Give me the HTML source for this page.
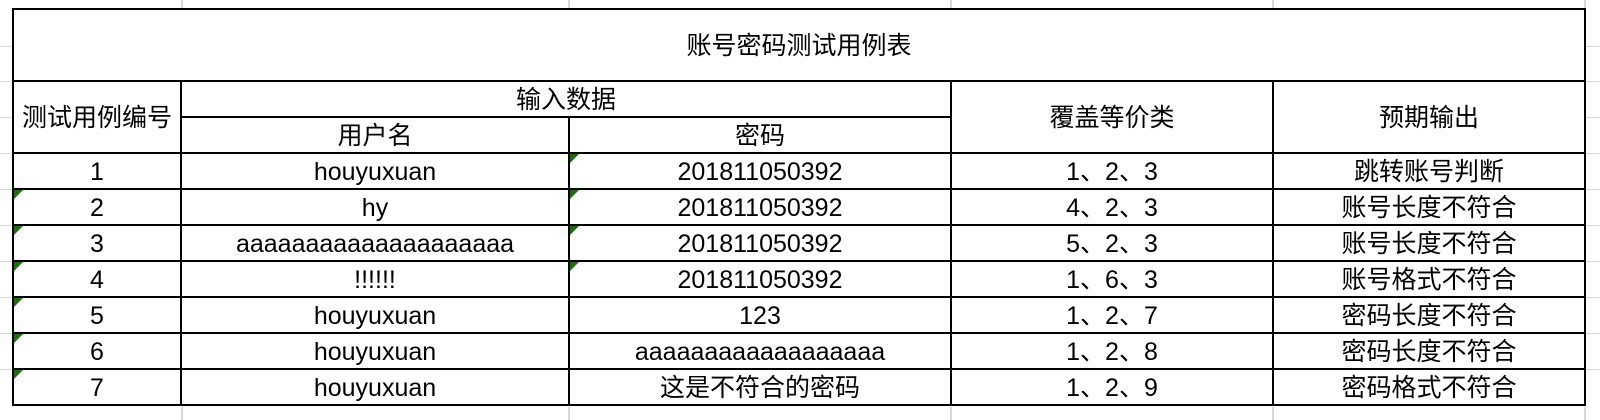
<!DOCTYPE html>
<html><head><meta charset="utf-8"><style>
body{margin:0;width:1600px;height:420px;background:#fff;position:relative;overflow:hidden;font-family:"Liberation Sans","Noto Sans CJK SC",sans-serif;font-size:25px;color:#000}
.g{position:absolute;background:#d6d6d6}
.l{position:absolute;background:#000}
.t{position:absolute;display:flex;align-items:center;justify-content:center;white-space:nowrap;line-height:1;padding-top:2px;box-sizing:border-box}
.tri{position:absolute;width:0;height:0;border-top:9px solid #1f6b12;border-right:9px solid transparent}
</style></head><body>
<div class="g" style="left:181px;top:0;width:2px;height:420px"></div>
<div class="g" style="left:568px;top:0;width:2px;height:420px"></div>
<div class="g" style="left:950px;top:0;width:2px;height:420px"></div>
<div class="g" style="left:1272px;top:0;width:2px;height:420px"></div>
<div class="g" style="left:1584px;top:0;width:2px;height:420px"></div>
<div class="g" style="left:0;top:46px;width:1600px;height:1px"></div>
<div class="g" style="left:0;top:81px;width:1600px;height:1px"></div>
<div class="g" style="left:0;top:117px;width:1600px;height:1px"></div>
<div class="g" style="left:0;top:153px;width:1600px;height:1px"></div>
<div class="g" style="left:0;top:189px;width:1600px;height:1px"></div>
<div class="g" style="left:0;top:225px;width:1600px;height:1px"></div>
<div class="g" style="left:0;top:261px;width:1600px;height:1px"></div>
<div class="g" style="left:0;top:297px;width:1600px;height:1px"></div>
<div class="g" style="left:0;top:333px;width:1600px;height:1px"></div>
<div class="g" style="left:0;top:369px;width:1600px;height:1px"></div>
<div style="position:absolute;left:13px;top:9px;width:1573px;height:398px;background:#fff"></div>
<div class="l" style="left:12px;top:8px;width:1574px;height:2px"></div>
<div class="l" style="left:12px;top:80px;width:1574px;height:2px"></div>
<div class="l" style="left:181px;top:116px;width:770px;height:2px"></div>
<div class="l" style="left:12px;top:152px;width:1574px;height:2px"></div>
<div class="l" style="left:12px;top:188px;width:1574px;height:2px"></div>
<div class="l" style="left:12px;top:224px;width:1574px;height:2px"></div>
<div class="l" style="left:12px;top:260px;width:1574px;height:2px"></div>
<div class="l" style="left:12px;top:296px;width:1574px;height:2px"></div>
<div class="l" style="left:12px;top:332px;width:1574px;height:2px"></div>
<div class="l" style="left:12px;top:368px;width:1574px;height:2px"></div>
<div class="l" style="left:12px;top:404px;width:1574px;height:2px"></div>
<div class="l" style="left:12px;top:8px;width:2px;height:398px"></div>
<div class="l" style="left:1584px;top:8px;width:2px;height:398px"></div>
<div class="l" style="left:180px;top:80px;width:2px;height:326px"></div>
<div class="l" style="left:568px;top:116px;width:2px;height:290px"></div>
<div class="l" style="left:950px;top:80px;width:2px;height:326px"></div>
<div class="l" style="left:1272px;top:80px;width:2px;height:326px"></div>
<div class="t" style="left:13px;top:10px;width:1572px;height:71px">账号密码测试用例表</div>
<div class="t" style="left:13px;top:82px;width:168px;height:71px">测试用例编号</div>
<div class="t" style="left:182px;top:81px;width:768px;height:36px">输入数据</div>
<div class="t" style="left:182px;top:118px;width:386px;height:35px">用户名</div>
<div class="t" style="left:570px;top:118px;width:380px;height:35px">密码</div>
<div class="t" style="left:952px;top:82px;width:320px;height:71px">覆盖等价类</div>
<div class="t" style="left:1274px;top:82px;width:310px;height:71px">预期输出</div>

<div class="t" style="left:13px;top:154px;width:168px;height:35px">1</div>
<div class="t" style="left:182px;top:154px;width:386px;height:35px">houyuxuan</div>
<div class="t" style="left:570px;top:154px;width:380px;height:35px">201811050392</div>
<div class="t" style="left:952px;top:154px;width:320px;height:35px">1、2、3</div>
<div class="t" style="left:1274px;top:154px;width:310px;height:35px">跳转账号判断</div>

<div class="t" style="left:13px;top:190px;width:168px;height:35px">2</div>
<div class="t" style="left:182px;top:190px;width:386px;height:35px">hy</div>
<div class="t" style="left:570px;top:190px;width:380px;height:35px">201811050392</div>
<div class="t" style="left:952px;top:190px;width:320px;height:35px">4、2、3</div>
<div class="t" style="left:1274px;top:190px;width:310px;height:35px">账号长度不符合</div>

<div class="t" style="left:13px;top:226px;width:168px;height:35px">3</div>
<div class="t" style="left:182px;top:226px;width:386px;height:35px">aaaaaaaaaaaaaaaaaaaa</div>
<div class="t" style="left:570px;top:226px;width:380px;height:35px">201811050392</div>
<div class="t" style="left:952px;top:226px;width:320px;height:35px">5、2、3</div>
<div class="t" style="left:1274px;top:226px;width:310px;height:35px">账号长度不符合</div>

<div class="t" style="left:13px;top:262px;width:168px;height:35px">4</div>
<div class="t" style="left:182px;top:262px;width:386px;height:35px">!!!!!!</div>
<div class="t" style="left:570px;top:262px;width:380px;height:35px">201811050392</div>
<div class="t" style="left:952px;top:262px;width:320px;height:35px">1、6、3</div>
<div class="t" style="left:1274px;top:262px;width:310px;height:35px">账号格式不符合</div>

<div class="t" style="left:13px;top:298px;width:168px;height:35px">5</div>
<div class="t" style="left:182px;top:298px;width:386px;height:35px">houyuxuan</div>
<div class="t" style="left:570px;top:298px;width:380px;height:35px">123</div>
<div class="t" style="left:952px;top:298px;width:320px;height:35px">1、2、7</div>
<div class="t" style="left:1274px;top:298px;width:310px;height:35px">密码长度不符合</div>

<div class="t" style="left:13px;top:334px;width:168px;height:35px">6</div>
<div class="t" style="left:182px;top:334px;width:386px;height:35px">houyuxuan</div>
<div class="t" style="left:570px;top:334px;width:380px;height:35px">aaaaaaaaaaaaaaaaaa</div>
<div class="t" style="left:952px;top:334px;width:320px;height:35px">1、2、8</div>
<div class="t" style="left:1274px;top:334px;width:310px;height:35px">密码长度不符合</div>

<div class="t" style="left:13px;top:370px;width:168px;height:35px">7</div>
<div class="t" style="left:182px;top:370px;width:386px;height:35px">houyuxuan</div>
<div class="t" style="left:570px;top:370px;width:380px;height:35px">这是不符合的密码</div>
<div class="t" style="left:952px;top:370px;width:320px;height:35px">1、2、9</div>
<div class="t" style="left:1274px;top:370px;width:310px;height:35px">密码格式不符合</div>

<div class="tri" style="left:14px;top:190px"></div>
<div class="tri" style="left:14px;top:226px"></div>
<div class="tri" style="left:14px;top:262px"></div>
<div class="tri" style="left:14px;top:298px"></div>
<div class="tri" style="left:14px;top:334px"></div>
<div class="tri" style="left:14px;top:370px"></div>
<div class="tri" style="left:570px;top:154px"></div>
<div class="tri" style="left:570px;top:190px"></div>
<div class="tri" style="left:570px;top:226px"></div>
<div class="tri" style="left:570px;top:262px"></div>
</body></html>
